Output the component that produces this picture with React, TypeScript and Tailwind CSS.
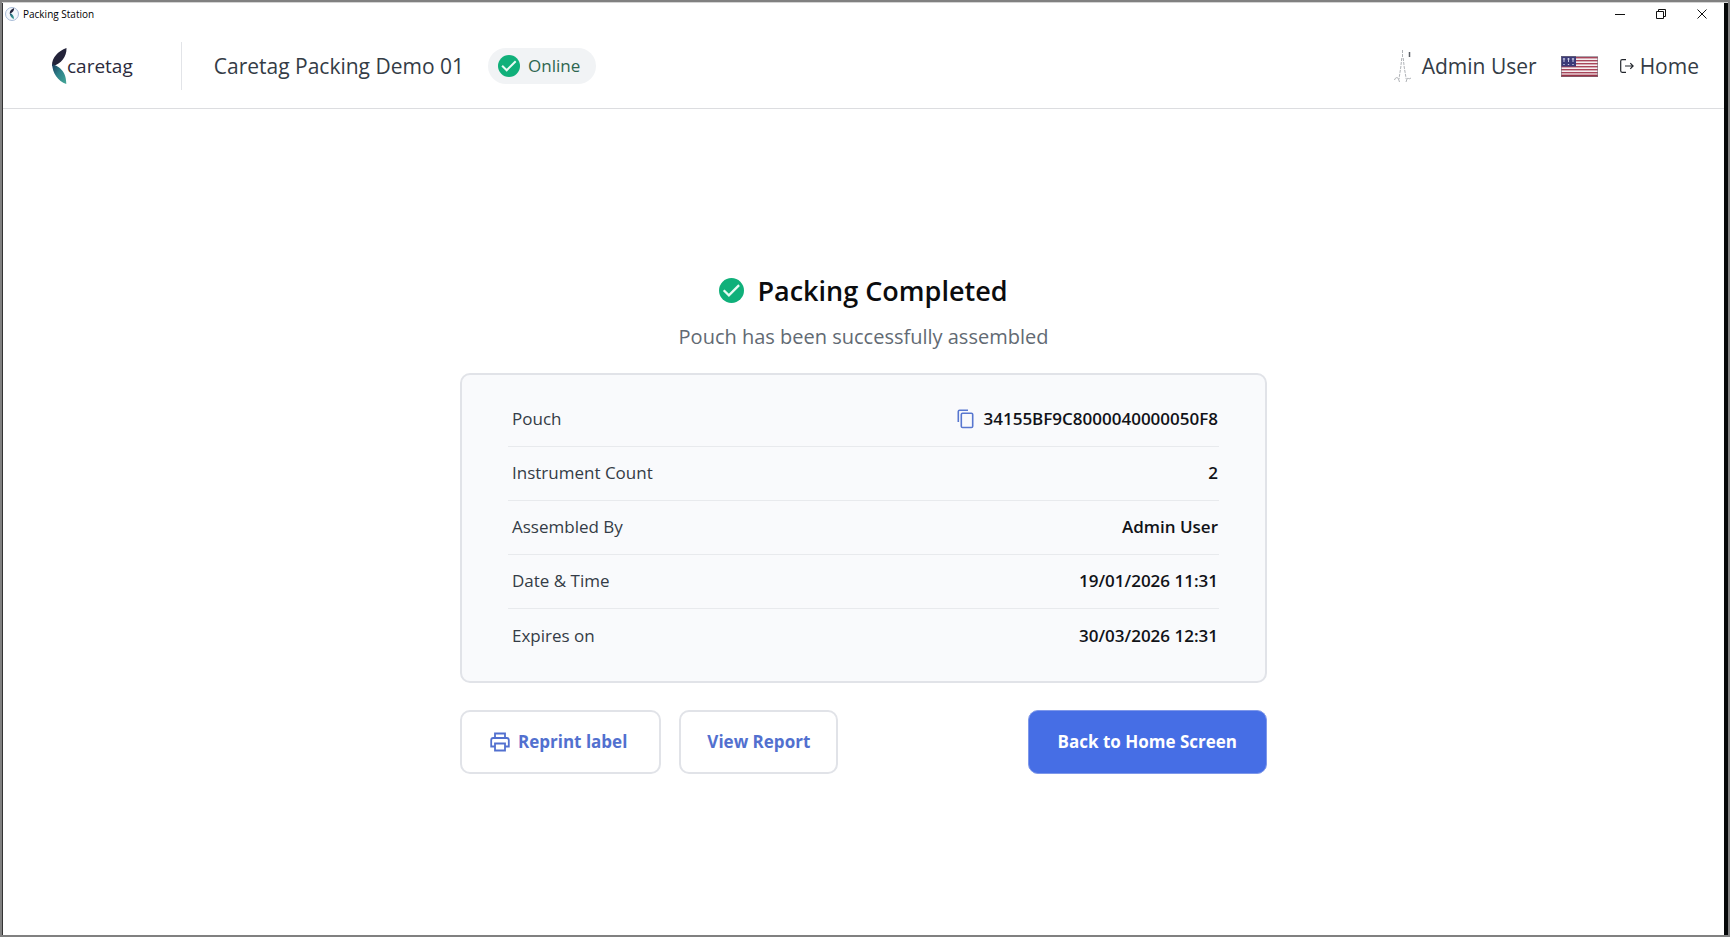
import React, { useState } from 'react';

type Detail = { label: string; value: string; copyable?: boolean };

const details: Detail[] = [
  { label: 'Pouch', value: '34155BF9C8000040000050F8', copyable: true },
  { label: 'Instrument Count', value: '2' },
  { label: 'Assembled By', value: 'Admin User' },
  { label: 'Date & Time', value: '19/01/2026 11:31' },
  { label: 'Expires on', value: '30/03/2026 12:31' },
];

function CheckBadge({ className }: { className: string }) {
  return (
    <svg viewBox="0 0 24 24" className={className} aria-hidden="true">
      <circle cx="12" cy="12" r="12" fill="#10b07a" />
      <path d="M4.500 11.800l5 4.800 9.800-9.800" fill="none" stroke="#e9fbf4" strokeWidth="2.2" />
    </svg>
  );
}

// The two leaves of the Caretag mark
function LeafMark({ className }: { className: string }) {
  return (
    <svg viewBox="0 0 15 36" className={className} aria-hidden="true">
      <defs>
        <linearGradient id="leaf" x1="0" y1="0" x2="1" y2="1">
          <stop offset="0" stopColor="#1d3a5c" />
          <stop offset="0.45" stopColor="#2c7f88" />
          <stop offset="1" stopColor="#45a897" />
        </linearGradient>
      </defs>
      <path d="M14.500 0C6 3 0 9.500 0 17.500C0 18 .3 18.500 1 18.200C9 15.500 14.800 9 14.500 0Z" fill="#23233a" />
      <path d="M.2 16C3 17.500 14.500 20 14.300 36C6 33 .2 25 .2 16Z" fill="url(#leaf)" />
    </svg>
  );
}

function TowerSketch() {
  return (
    <svg viewBox="0 0 18 34" className="h-[34px] w-[18px]" fill="none" stroke="#9a9ea3" aria-hidden="true">
      <path d="M8.500 1v8M7.800 9l-1 9-1.800 12M9.200 9l1 9 2 12" strokeWidth=".8" strokeDasharray="3 1" />
      <path d="M.5 31c1-3 3-3 4-1l1 3M12 33l1-3c1-2 2 1 4-1" strokeWidth=".8" />
      <path d="M15.500 3v5" stroke="#5b5f66" strokeWidth="1.500" />
    </svg>
  );
}

function FlagUS() {
  return (
    <svg viewBox="0 0 37 21" className="h-[21px] w-[37px]" aria-hidden="true">
      <rect width="37" height="21" fill="#f6eef0" />
      {[0, 3, 6, 9, 12, 15].map((y) => (
        <rect key={y} y={y + 1} width="37" height="1.4" fill="#a8455a" />
      ))}
      <rect y="18.600" width="37" height="2.400" fill="#9b3347" />
      <rect width="15" height="10.500" fill="#3b3a78" />
      {[3, 7.5, 12].map((x) => (
        <path key={x} d={`M${x - 1.2} 3h2.400M${x} 2v4M${x - 0.7} 8.500h1.400`} stroke="#d8d8ee" strokeWidth=".9" />
      ))}
      <rect x=".5" y=".5" width="36" height="20" fill="none" stroke="#77707c" strokeOpacity=".6" />
    </svg>
  );
}

function TitleBar() {
  return (
    <div className="flex h-[21px] items-center justify-between pl-[2px] pr-[17px] text-black">
      <div className="flex items-center gap-1">
        <span className="flex size-[14px] items-center justify-center rounded-full border border-[#a9bcd8] bg-[#f3f7fc]">
          <LeafMark className="h-[11px] w-[6px]" />
        </span>
        <span className="text-[10px] leading-[14px]">Packing Station</span>
      </div>
      <div className="flex items-center gap-[31px]">
        <button type="button" aria-label="Minimize">
          <svg viewBox="0 0 10 10" className="size-[10px]" stroke="#111">
            <path d="M0 5.500h10" />
          </svg>
        </button>
        <button type="button" aria-label="Restore">
          <svg viewBox="0 0 10 10" className="size-[10px]" fill="none" stroke="#111">
            <path d="M.5 2.500h7v7h-7zM2.500 2.500v-2h7v7h-2" />
          </svg>
        </button>
        <button type="button" aria-label="Close">
          <svg viewBox="0 0 10 10" className="size-[10px]" stroke="#111">
            <path d="M.5.5l9 9M9.500.5l-9 9" />
          </svg>
        </button>
      </div>
    </div>
  );
}

function Header() {
  return (
    <header className="flex h-[85px] items-center justify-between border-b border-[#dcdde0] pl-[49px] pr-[25px] text-[#343c46]">
      <div className="flex items-center">
        <div className="flex items-center text-[#2c2b3c]">
          <LeafMark className="h-[36px] w-[15px]" />
          <span className="text-[19px] leading-[28px] font-medium">caretag</span>
        </div>
        <div className="ml-12 h-12 w-px bg-[#e2e4e8]" />
        <span className="ml-8 text-[21px] leading-[28px]">Caretag Packing Demo 01</span>
        <span className="ml-6 flex h-9 items-center gap-2 rounded-full bg-[#f1f3f5] pl-[10px] pr-4 text-[17px] leading-[24px] text-[#2d6650]">
          <CheckBadge className="size-[22px]" />
          Online
        </span>
      </div>
      <div className="flex items-center">
        <TowerSketch />
        <span className="ml-[10px] text-[21px] leading-[28px]">Admin User</span>
        <button type="button" aria-label="Language" className="ml-6">
          <FlagUS />
        </button>
        <a href="#home" className="ml-[22px] flex items-center gap-[6px] text-[21px] leading-[28px]">
          <svg viewBox="0 0 14 14" className="size-[14px]" fill="none" stroke="#22262c" strokeWidth="1.2">
            <path d="M6 .7H2.200Q.7.700.7 2.200v9.600q0 1.500 1.500 1.500H6M5 7h8M10.300 4.200L13.100 7l-2.800 2.800" />
          </svg>
          Home
        </a>
      </div>
    </header>
  );
}

function DetailRow({ label, value, copyable }: Detail) {
  const [copied, setCopied] = useState(false);

  const copy = () => {
    navigator.clipboard?.writeText(value);
    setCopied(true);
  };

  return (
    <div className="flex h-[54px] items-center justify-between border-b border-[#e8eaed] pl-1 pr-px last:border-b-0">
      <dt className="text-[#343c46]">{label}</dt>
      <dd className="flex items-center gap-[10px] font-semibold text-[#111318]">
        {copyable && (
          <button type="button" onClick={copy} aria-label={copied ? 'Copied' : 'Copy'}>
            <svg viewBox="0 0 17 20" className="h-[20px] w-[17px]" fill="none" stroke="#5877cf" strokeWidth="1.6">
              <path d="M1.300 13V2.600Q1.300 1.300 2.600 1.300H11" />
              <rect x="4.300" y="4.300" width="11.400" height="14.200" rx="1.300" />
            </svg>
          </button>
        )}
        {value}
      </dd>
    </div>
  );
}

export default function App() {
  return (
    <div className="flex min-h-screen flex-col border-2 border-[#808080] bg-white font-['Open_Sans','Noto_Sans',sans-serif]">
      <div className="h-px bg-[#d4d4d4]" />
      <div className="flex flex-1 flex-col border-l border-r-4 border-l-[#333] border-r-[#050708]">
        <TitleBar />
        <Header />

        <main className="flex flex-1 flex-col items-center justify-center pb-0.5">
          <div className="w-full max-w-[807px]">
            {/* Heading */}
            <div className="flex items-center justify-center gap-[13px]">
              <CheckBadge className="size-[25px]" />
              <h1 className="text-[27px] leading-[44px] font-semibold text-[#0b0c0e]">Packing Completed</h1>
            </div>
            <p className="mt-2 text-center text-[20px] leading-[32px] text-[#626a73]">
              Pouch has been successfully assembled
            </p>

            {/* Pouch details */}
            <dl className="mt-5 rounded-[10px] border-2 border-[#e1e3e8] bg-[#f9fafc] px-[46px] py-[18px] text-[17px] leading-[24px]">
              {details.map((d) => (
                <DetailRow key={d.label} {...d} />
              ))}
            </dl>

            {/* Actions */}
            <div className="mt-[27px] flex items-center text-[17px] leading-[24px] font-bold">
              <button
                type="button"
                className="flex h-16 items-center gap-2 rounded-[10px] border-2 border-[#e1e3e8] pl-7 pr-8 text-[#5270cf]"
              >
                <svg viewBox="0 0 20 20" className="size-[20px]" fill="none" stroke="currentColor" strokeWidth="1.8">
                  <path d="M5 6V1.500h10V6M5 14.500H1.200V8Q1.200 6 3.200 6h13.600q2 0 2 2v6.500H15" />
                  <path d="M5 11.500h10v7H5z" />
                </svg>
                Reprint label
              </button>
              <button
                type="button"
                className="ml-[18px] h-16 rounded-[10px] border-2 border-[#e1e3e8] px-[26px] text-[#5270cf]"
              >
                View Report
              </button>
              <button
                type="button"
                className="ml-auto h-16 rounded-[10px] border border-[#7e98ea] bg-[#466ee5] px-[29px] text-white"
              >
                Back to Home Screen
              </button>
            </div>
          </div>
        </main>
      </div>
    </div>
  );
}
